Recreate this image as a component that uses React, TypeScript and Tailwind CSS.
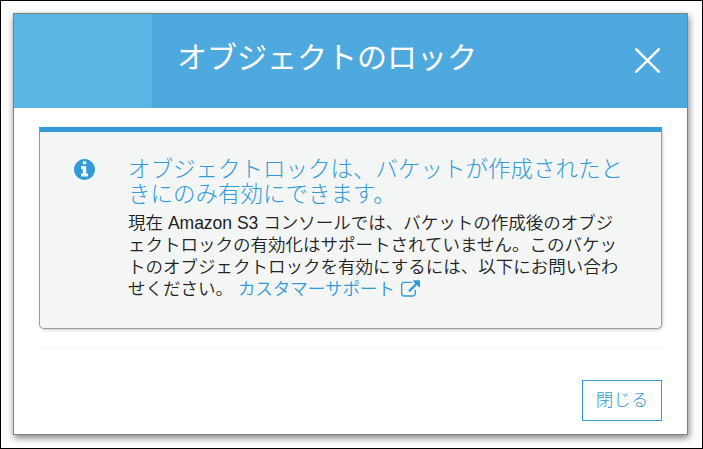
import React from 'react';

const bodyLines = [
  'ェクトロックの有効化はサポートされていません。このバケッ',
  'トのオブジェクトロックを有効にするには、以下にお問い合わ',
];

function InfoIcon() {
  return (
    <svg viewBox="128 128 1536 1536" fill="currentColor" className="mt-[2px] size-[21px] shrink-0 text-[#329ad6]">
      <path d="M1152 1376v-160q0-14-9-23t-23-9h-96v-512q0-14-9-23t-23-9h-320q-14 0-23 9t-9 23v160q0 14 9 23t23 9h96v320h-96q-14 0-23 9t-9 23v160q0 14 9 23t23 9h448q14 0 23-9t9-23zm-128-896v-160q0-14-9-23t-23-9h-192q-14 0-23 9t-9 23v160q0 14 9 23t23 9h192q14 0 23-9t9-23zm640 416q0 209-103 385.5t-279.5 279.5-385.5 103-385.5-103-279.5-279.5-103-385.5 103-385.5 279.5-279.5 385.5-103 385.5 103 279.5 279.5 103 385.5z" />
    </svg>
  );
}

function ExternalLinkIcon() {
  return (
    <svg viewBox="0 0 1792 1536" fill="currentColor" className="inline-block w-[19px] h-[17px] ml-[6px] align-[-2px]">
      <path d="M1408 928v320q0 119-84.5 203.5t-203.5 84.5h-832q-119 0-203.5-84.5t-84.5-203.5v-832q0-119 84.5-203.5t203.5-84.5h704q14 0 23 9t9 23v64q0 14-9 23t-23 9h-704q-66 0-113 47t-47 113v832q0 66 47 113t113 47h832q66 0 113-47t47-113v-320q0-14 9-23t23-9h64q14 0 23 9t9 23zm384-864v512q0 26-19 45t-45 19-45-19l-176-176-652 652q-10 10-23 10t-23-10l-114-114q-10-10-10-23t10-23l652-652-176-176q-19-19-19-45t19-45 45-19h512q26 0 45 19t19 45z" />
    </svg>
  );
}

function ModalHeader() {
  return (
    <header className="flex h-[94px] bg-[#4ea9de] text-white">
      <div className="w-[138px] shrink-0 bg-[#58b5e4]"></div>
      <h1 className="flex-1 pl-[25px] pt-[22px] text-[30px] leading-[44px] font-normal whitespace-nowrap">オブジェクトのロック</h1>
      <button type="button" aria-label="閉じる" className="self-start mt-[34px] mr-[27px]">
        <svg viewBox="0 0 25 25" className="block size-[25px]" fill="none" stroke="currentColor" strokeWidth="2.5" strokeLinecap="round">
          <path d="M1.3 1.3l22.4 22.4M23.7 1.3L1.3 23.7" />
        </svg>
      </button>
    </header>
  );
}

function InfoPanel() {
  return (
    <section className="flex h-[202px] rounded-b-[5px] border border-t-[5px] border-[#999f9f] border-t-[#329ad6] bg-[#f4f6f6] pl-[34px] pt-[25px] shadow-[1px_1px_3px_rgba(0,0,0,0.2)]">
      <InfoIcon />
      <div className="ml-[33px] whitespace-nowrap">
        <h2 className="text-[22.5px] leading-[25px] font-light text-[#329ad6]">
          オブジェクトロックは、バケットが作成されたと
          <br />
          きにのみ有効にできます。
        </h2>
        <div className="mt-[5px] text-[17.5px] leading-[22px] text-[#222]">
          <p>
            現在 <span className="font-normal">Amazon S3</span> コンソールでは、バケットの作成後のオブジ
          </p>
          {bodyLines.map((line) => (
            <p key={line}>{line}</p>
          ))}
          <p>
            せください。{' '}
            <a href="#" className="text-[#329ad6]">
              カスタマーサポート
              <ExternalLinkIcon />
            </a>
          </p>
        </div>
      </div>
    </section>
  );
}

export default function App() {
  return (
    <div className="h-[449px] w-[703px] border border-black bg-white p-3 font-[350] font-['Liberation_Sans','Noto_Sans_CJK_JP',sans-serif]">
      <div className="h-[422px] w-[675px] border border-[#808080] bg-white shadow-[1px_3px_7px_rgba(0,0,0,0.5)]">
        <ModalHeader />
        <div className="px-[25px] pt-[19px]">
          <InfoPanel />
          <hr className="mt-[19px] border-[#f4f4f4]" />
          <div className="mt-[31px] flex justify-end">
            <button type="button" className="h-[41px] w-20 border border-[#329ad6] text-[17.5px] leading-[39px] font-light text-[#329ad6]">
              閉じる
            </button>
          </div>
        </div>
      </div>
    </div>
  );
}
